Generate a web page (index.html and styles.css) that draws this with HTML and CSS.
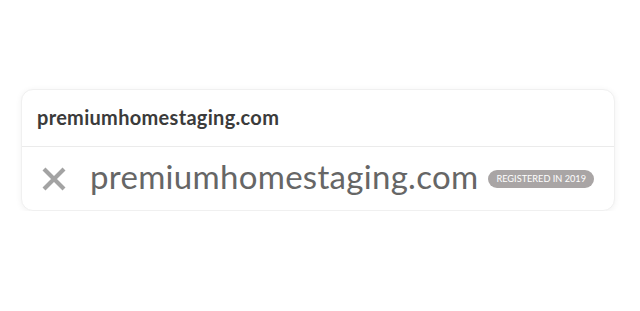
FILE: index.html
```html
<!DOCTYPE html>
<html>
<head>
<meta charset="utf-8">
<link rel="stylesheet" href="styles.css">
</head>
<body>
<div class="page">
  <div class="card">
    <div class="card-head">premiumhomestaging.com</div>
    <div class="card-body">
      <svg class="x-icon" width="26" height="26" viewBox="0 0 26 26"><path d="M3 3 L23 23 M23 3 L3 23" stroke="#a3a3a3" stroke-width="4.2" stroke-linecap="butt" fill="none"/></svg>
      <span class="domain">premiumhomestaging.com</span>
      <span class="badge">REGISTERED IN 2019</span>
    </div>
  </div>
</div>
</body>
</html>
```
FILE: styles.css
```css
html, body { margin: 0; padding: 0; background: #fff; }
.page { padding: 89px 0 0 21px; }
.card {
  width: 592px;
  border: 1px solid #f0f0f0;
  border-radius: 12px;
  box-shadow: 0 1px 6px rgba(0,0,0,0.06);
  background: #fff;
  font-family: "Lato", sans-serif;
}
.card-head {
  height: 57px;
  box-sizing: border-box;
  padding: 15px 0 0 15px;
  font-size: 20px;
  letter-spacing: 0.3px;
  font-weight: 700;
  color: #3b3b3b;
  border-bottom: 1px solid #ebebeb;
}
.card-body {
  height: 63px;
  display: flex;
  align-items: center;
  padding-left: 19px;
}
.x-icon { flex: none; margin-right: 23px; }
.domain {
  font-size: 33px;
  letter-spacing: 0.3px;
  color: #666;
  font-weight: 400;
  margin-bottom: 6px;
}
.badge {
  margin-left: 10px;
  background: #a9a5a5;
  color: #fff;
  font-size: 9.2px;
  border-radius: 9px;
  height: 18px;
  line-height: 18px;
  padding: 0 8px;
}
```
